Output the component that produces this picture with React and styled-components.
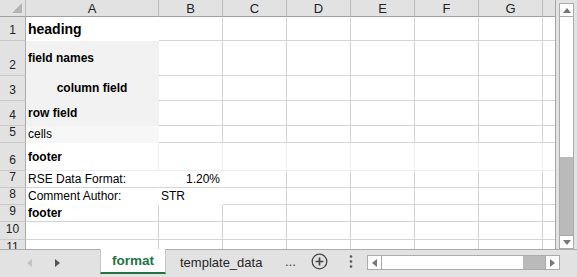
import styled, { createGlobalStyle } from "styled-components";

const GlobalStyle = createGlobalStyle`
  body {
    margin: 0;
    font-family: "Liberation Sans", Arial, sans-serif;
  }
`;

const COLS = [
  { label: "A", w: 133 },
  { label: "B", w: 64 },
  { label: "C", w: 64 },
  { label: "D", w: 64 },
  { label: "E", w: 64 },
  { label: "F", w: 64 },
  { label: "G", w: 64 },
  { label: "", w: 12, last: true },
];

const GREY = "#f2f2f2";

const ROWS = [
  { n: 1, h: 24, cells: { 0: { text: "heading", bold: true, size: 14, fill: "#fff", line: "#fff" } } },
  { n: 2, h: 35, cells: { 0: { text: "field names", bold: true, fill: GREY, line: GREY } } },
  { n: 3, h: 25, cells: { 0: { text: "column field", bold: true, align: "center", fill: GREY, line: GREY } } },
  { n: 4, h: 25, cells: { 0: { text: "row field", bold: true, fill: GREY, line: GREY } } },
  { n: 5, h: 17, cells: { 0: { text: "cells", fill: "#f7f7f7", line: "#f7f7f7" } } },
  { n: 6, h: 28, rowLine: "#f0f0f0", cells: { 0: { text: "footer", bold: true } } },
  {
    n: 7,
    h: 17,
    cells: {
      0: { text: "RSE Data Format:", vline: "#fff" },
      1: { text: "1.20%", align: "right", vline: "#fff" },
    },
  },
  {
    n: 8,
    h: 17,
    cells: {
      0: { text: "Comment Author:", vline: "#fff", hline: "#fff" },
      1: { text: "STR", vline: "#fff", hline: "#fff" },
    },
  },
  { n: 9, h: 17, cells: { 0: { text: "footer", bold: true } } },
  { n: 10, h: 18, cells: {} },
  { n: 11, h: 18, cells: {} },
];

const App = () => {
  return (
    <Window>
      <GlobalStyle />
      <Main>
        <Sheet>
          <HeaderRow>
            <Corner>
              <svg width="10" height="10" viewBox="0 0 10 10">
                <polygon points="10,0 10,10 0,10" fill="#b4b4b4" />
              </svg>
            </Corner>
            {COLS.map((c, i) => (
              <ColHead key={i} $w={c.w} $last={c.last}>
                {c.label}
              </ColHead>
            ))}
          </HeaderRow>
          {ROWS.map((r) => (
            <Row key={r.n} $h={r.h}>
              <RowHead>{r.n}</RowHead>
              {COLS.map((c, i) => {
                const cell = r.cells[i] || {};
                const line = cell.line || r.rowLine;
                return (
                  <Cell
                    key={i}
                    $w={c.w}
                    $last={c.last}
                    $fill={cell.fill}
                    $bold={cell.bold}
                    $size={cell.size}
                    $align={cell.align}
                    $vline={cell.vline || line}
                    $hline={cell.hline || line}
                  >
                    {cell.text}
                  </Cell>
                );
              })}
            </Row>
          ))}
        </Sheet>
        <VBar>
          <VScroll>
            <VBtn>
              <svg width="8" height="5" viewBox="0 0 8 5">
                <polygon points="0,5 8,5 4,0" fill="#777" />
              </svg>
            </VBtn>
            <VThumb />
            <VBtn $bottom>
              <svg width="8" height="5" viewBox="0 0 8 5">
                <polygon points="0,0 8,0 4,5" fill="#777" />
              </svg>
            </VBtn>
          </VScroll>
        </VBar>
      </Main>
      <TabBar>
        <Nav>
          <svg width="5" height="8" viewBox="0 0 5 8">
            <polygon points="5,0 5,8 0,4" fill="#c2c2c2" />
          </svg>
          <svg width="5" height="8" viewBox="0 0 5 8">
            <polygon points="0,0 0,8 5,4" fill="#555" />
          </svg>
        </Nav>
        <ActiveTab>format</ActiveTab>
        <Tab>template_data</Tab>
        <Tools>
          <Ellipsis>...</Ellipsis>
          <AddBtn>
            <svg width="17" height="17" viewBox="0 0 17 17">
              <circle cx="8.5" cy="8.5" r="7.3" fill="none" stroke="#444" strokeWidth="1.3" />
              <path d="M8.5 4.6v7.8M4.6 8.5h7.8" stroke="#444" strokeWidth="1.7" />
            </svg>
          </AddBtn>
          <Kebab>
            <svg width="4" height="13" viewBox="0 0 4 13">
              <circle cx="2" cy="1.5" r="1.3" fill="#555" />
              <circle cx="2" cy="6.5" r="1.3" fill="#555" />
              <circle cx="2" cy="11.5" r="1.3" fill="#555" />
            </svg>
          </Kebab>
          <HScroll>
            <HBtn>
              <svg width="5" height="8" viewBox="0 0 5 8">
                <polygon points="5,0 5,8 0,4" fill="#777" />
              </svg>
            </HBtn>
            <HTrack />
            <HThumb />
            <HBtn $right>
              <svg width="5" height="8" viewBox="0 0 5 8">
                <polygon points="0,0 0,8 5,4" fill="#777" />
              </svg>
            </HBtn>
          </HScroll>
        </Tools>
      </TabBar>
    </Window>
  );
};

export default App;

const Window = styled.div`
  width: 577px;
  height: 277px;
  overflow: hidden;
  display: flex;
  flex-direction: column;
  background: #e2e2e2;
`;

const Main = styled.div`
  display: flex;
  height: 249px;
  flex: none;
`;

const Sheet = styled.div`
  box-sizing: border-box;
  width: 556px;
  height: 249px;
  overflow: hidden;
  background: #fff;
  border-right: 1px solid #a6a6a6;
`;

const HeaderRow = styled.div`
  display: flex;
  height: 17px;
  background: #e2e2e2;
`;

const Corner = styled.div`
  box-sizing: border-box;
  width: 26px;
  flex: none;
  display: flex;
  align-items: flex-end;
  justify-content: flex-end;
  padding: 0 3px 3px 0;
  border-right: 1px solid #bdbdbd;
  border-bottom: 1px solid #9f9f9f;
`;

const ColHead = styled.div`
  box-sizing: border-box;
  width: ${(p) => p.$w}px;
  flex: none;
  display: flex;
  align-items: center;
  justify-content: center;
  font-size: 13px;
  color: #222;
  border-right: ${(p) => (p.$last ? "none" : "1px solid #b8b8b8")};
  border-bottom: 1px solid #9f9f9f;
`;

const Row = styled.div`
  display: flex;
  height: ${(p) => p.$h}px;
  flex: none;
`;

const RowHead = styled.div`
  box-sizing: border-box;
  width: 26px;
  flex: none;
  display: flex;
  align-items: flex-end;
  justify-content: center;
  padding-bottom: 3px;
  background: #e2e2e2;
  font-size: 12px;
  line-height: 13px;
  color: #222;
  border-right: 1px solid #ababab;
  border-bottom: 1px solid #c8c8c8;
`;

const Cell = styled.div`
  box-sizing: border-box;
  width: ${(p) => p.$w}px;
  flex: none;
  display: flex;
  align-items: center;
  justify-content: ${(p) =>
    p.$align === "right" ? "flex-end" : p.$align === "center" ? "center" : "flex-start"};
  padding: 0 2px;
  white-space: nowrap;
  background: ${(p) => p.$fill || "#fff"};
  border-right: ${(p) => (p.$last ? "none" : `1px solid ${p.$vline || "#d4d4d4"}`)};
  border-bottom: 1px solid ${(p) => p.$hline || "#d4d4d4"};
  font-size: ${(p) => p.$size || 12}px;
  font-weight: ${(p) => (p.$bold ? 700 : 400)};
  color: #000;
`;

const VBar = styled.div`
  flex: 1;
  padding: 3px 0 0 3px;
`;

const VScroll = styled.div`
  box-sizing: border-box;
  width: 15px;
  height: 246px;
  display: flex;
  flex-direction: column;
  background: #fff;
  border: 1px solid #ababab;
`;

const VBtn = styled.div`
  box-sizing: border-box;
  height: 13px;
  flex: none;
  display: flex;
  align-items: center;
  justify-content: center;
  background: #fff;
  ${(p) => (p.$bottom ? "border-top: 1px solid #ababab;" : "border-bottom: 1px solid #ababab;")}
`;

const VThumb = styled.div`
  margin-top: auto;
  height: 78px;
  background: #bababa;
`;

const TabBar = styled.div`
  flex: 1;
  display: flex;
  align-items: flex-start;
  border-top: 1px solid #ababab;
`;

const Nav = styled.div`
  width: 100px;
  height: 26px;
  display: flex;
  align-items: center;
  gap: 23px;
  padding-left: 27px;
  box-sizing: border-box;
`;

const ActiveTab = styled.div`
  box-sizing: border-box;
  width: 66px;
  height: 25px;
  margin-top: -1px;
  display: flex;
  align-items: center;
  justify-content: center;
  background: #fff;
  border-left: 1px solid #c6c6c6;
  border-right: 1px solid #c6c6c6;
  border-bottom: 2px solid #217346;
  color: #217346;
  font-weight: 700;
  font-size: 13.5px;
`;

const Tab = styled.div`
  box-sizing: border-box;
  width: 109px;
  height: 25px;
  display: flex;
  align-items: center;
  padding-left: 14px;
  color: #262626;
  font-size: 13px;
`;

const Tools = styled.div`
  flex: 1;
  height: 26px;
  display: flex;
  align-items: center;
`;

const Ellipsis = styled.div`
  margin-left: 10px;
  font-size: 13px;
  color: #333;
  margin-top: -3px;
`;

const AddBtn = styled.div`
  display: flex;
  margin-left: 15px;
  margin-top: -3px;
`;

const Kebab = styled.div`
  display: flex;
  margin-left: 21px;
  margin-top: -3px;
`;

const HScroll = styled.div`
  box-sizing: border-box;
  margin-left: 14px;
  width: 193px;
  height: 15px;
  margin-top: -1px;
  display: flex;
  background: #fff;
  border: 1px solid #ababab;
`;

const HBtn = styled.div`
  box-sizing: border-box;
  width: 14px;
  flex: none;
  display: flex;
  align-items: center;
  justify-content: center;
  ${(p) => (p.$right ? "border-left: 1px solid #ababab;" : "border-right: 1px solid #ababab;")}
`;

const HTrack = styled.div`
  flex: 1;
`;

const HThumb = styled.div`
  width: 22px;
  background: #bababa;
`;
